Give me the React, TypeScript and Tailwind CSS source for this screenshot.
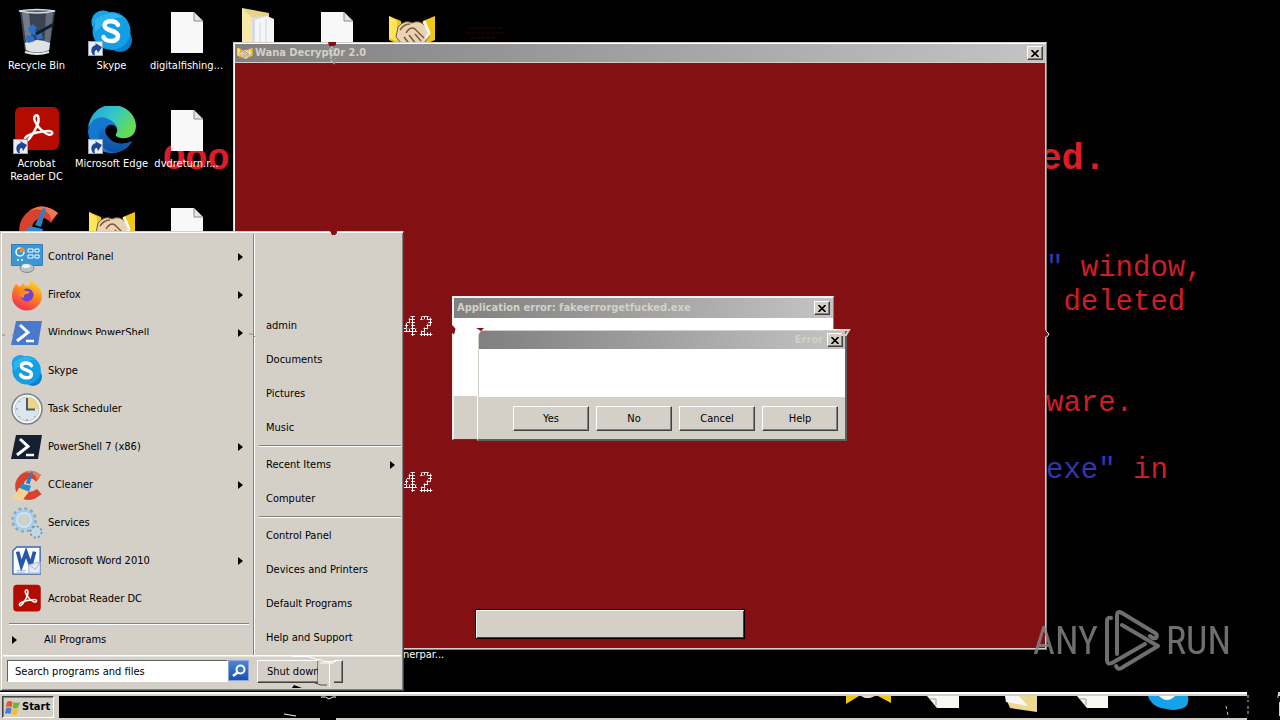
import React from "react";

type IconProps = { className?: string };

const UI = "font-['DejaVu_Sans_Condensed','DejaVu_Sans',sans-serif]";
const RAISED =
  "border border-t-white border-l-white border-r-[#404040] border-b-[#404040] bg-[#d4d0c8] shadow-[inset_-1px_-1px_0_#808080]";

function ShortcutArrow() {
  return (
    <svg viewBox="0 0 15 15" className="absolute bottom-0 left-0 h-[15px] w-[15px]" aria-hidden="true">
      <rect width="15" height="15" fill="#9aa4b4" />
      <rect x="1" y="1" width="13" height="13" fill="#e9eef6" />
      <path d="M5 14C2 10 3 5 8 4L7 2l7 4-4 6-1-3C7 9 6 11 7 14z" fill="#1f4796" />
    </svg>
  );
}

function RecycleBin({ className }: IconProps) {
  return (
    <svg viewBox="0 0 48 48" className={className} aria-hidden="true">
      <path d="M7 3L12 44Q24 49 36 44L42 3z" fill="#3a4450" />
      <path d="M9 5L14 42Q17 45 20 45L16 5z" fill="#8d979f" opacity=".7" />
      <path d="M33 5L31 44L36 43L40 5z" fill="#6d7883" opacity=".8" />
      <path d="M12 35Q24 29 37 35L36 42Q24 47 13 42z" fill="#dfe3e6" />
      <path d="M15 20l5-4 4 4-2 2 2 4-4 1-4-3zM14 27l6 1 2 5-7 2-2-4zM23 27l5-3 2 6-6 2z" fill="#2c6fc8" />
      <path d="M23 26L41 16" stroke="#101a33" strokeWidth="3" />
      <path d="M6 3Q24 0 42 3Q24 7 6 3z" fill="#56616c" stroke="#d7dde2" strokeWidth="1.500" />
      <path d="M12 44Q24 48 36 44" stroke="#e9edf0" strokeWidth="2" fill="none" />
    </svg>
  );
}

function SkypeIcon({ className }: IconProps) {
  return (
    <svg viewBox="0 0 48 48" className={className} aria-hidden="true">
      <circle cx="15" cy="14" r="11.500" fill="#1aa5ea" />
      <circle cx="32" cy="32" r="12" fill="#0a7fd0" />
      <circle cx="23.500" cy="23" r="19" fill="#129fe4" />
      <path d="M7 12Q20 0 35 9Q21 9 7 24z" fill="#3dbdf2" opacity=".7" />
      <path
        d="M30 17C28 12.500 17 11.500 16.500 17.500C16.500 23.500 30 21.500 30 28.500C29.500 35 17.500 34 15.500 29"
        fill="none"
        stroke="#fff"
        strokeWidth="4.500"
        strokeLinecap="round"
      />
    </svg>
  );
}

function PageIcon({ className }: IconProps) {
  return (
    <svg viewBox="0 0 48 48" className={className} aria-hidden="true">
      <path d="M8 4h23l9 9v32H8z" fill="#f8f8f8" />
      <path d="M31 4v9h9z" fill="#e4e4e4" stroke="#8a8a8a" strokeWidth="1" />
    </svg>
  );
}

function FolderIcon({ className }: IconProps) {
  return (
    <svg viewBox="0 0 48 48" className={className} aria-hidden="true">
      <path d="M4 0l27 5v42H4z" fill="#e8d384" />
      <path d="M11 10l14-2v38H11z" fill="#d7dce2" />
      <path d="M17 12l12-4 7 3v36H17z" fill="#f5f6f9" />
      <path d="M4 0l10 10v37H4z" fill="#f6e9a8" />
      <path d="M22 14v32M28 11v34" stroke="#cfd4da" strokeWidth="1" />
    </svg>
  );
}

function HandshakeIcon({ className }: IconProps) {
  return (
    <svg viewBox="0 0 48 48" className={className} aria-hidden="true">
      <path d="M1 8l12 5 4 26L1 32zM47 8l-12 5-4 26 16-7z" fill="#f2c714" />
      <path d="M1 8l8 5v20l-8-3z" fill="#ffe558" />
      <path d="M10 19Q17 11 24 15Q32 11 38 19L41 29Q35 37 28 43L22 41Q14 38 8 29z" fill="#ead3b4" stroke="#7a5a38" strokeWidth="1" />
      <path d="M18 25q4-7 9-4l9 9M16 29l7 9M21 27l7 9M27 26l6 7M12 22q4-6 10-6" fill="none" stroke="#7b5a3a" strokeWidth="1.500" />
      <path d="M36 13l5 12-3 5" fill="none" stroke="#f8f8f0" strokeWidth="3" />
    </svg>
  );
}

function AcrobatIcon({ className }: IconProps) {
  return (
    <svg viewBox="0 0 48 48" className={className} aria-hidden="true">
      <rect x="2" y="1" width="44" height="43" rx="6" fill="#b30b00" />
      <path
        d="M12 34C10 30 21 26 34 25C42 24 40 31 34 28C26 24 19 13 22 10C26 7 27 15 23 22C19 30 14 37 12 34z"
        fill="none"
        stroke="#fff"
        strokeWidth="2.500"
      />
    </svg>
  );
}

function EdgeIcon({ className }: IconProps) {
  return (
    <svg viewBox="0 0 48 48" className={className} aria-hidden="true">
      <defs>
        <linearGradient id="edgeTop" x1="0" x2="1" y1="0" y2=".5">
          <stop offset="0" stopColor="#1d9fd4" />
          <stop offset=".5" stopColor="#30c5cf" />
          <stop offset="1" stopColor="#66dc52" />
        </linearGradient>
        <linearGradient id="edgeLow" x1="0" x2="0" y1="0" y2="1">
          <stop offset="0" stopColor="#1a6fc4" />
          <stop offset="1" stopColor="#0f4f9f" />
        </linearGradient>
      </defs>
      <path d="M0 22C2 7 12 -1 24 -1C38 -1 48 9 48 20C48 30 40 33 33 32C29 31 27 30 28 28C31 24 29 17 20 16C10 15 3 16 0 22z" fill="url(#edgeTop)" />
      <path d="M0 24C3 12 13 9 20 13C25 15 29 19 29 23C27 18 21 17 18 22C14 31 28 43 44 35C40 43 32 47 24 47C10 47 0 37 0 24z" fill="#1577cf" />
      <path d="M17 20C10 24 8 33 14 40C18 45 24 47 29 46C36 45 42 40 44 35C36 40 26 38 21 32C17 28 16 24 17 20z" fill="url(#edgeLow)" />
    </svg>
  );
}

function CCleanerIcon({ className }: IconProps) {
  return (
    <svg viewBox="0 0 48 48" className={className} aria-hidden="true">
      <path d="M45 9Q30-3 16 7Q2 18 8 35Q17 51 35 45L46 38L39 30Q28 38 21 30Q16 20 25 15Q32 12 38 19z" fill="#d8412c" />
      <path d="M45 9Q30-3 16 7Q25 3 34 8Q38 11 38 16z" fill="#ee7a55" />
      <path d="M30 4l3 1-5 18-6-2z" fill="#2f7fc4" />
      <path d="M16 22l14 3-3 9-15-5z" fill="#2b8ad2" />
      <path d="M12 28l15 6-10 13Q6 46 0 40q8-3 12-12z" fill="#f3d29a" />
    </svg>
  );
}

function ControlPanelIcon({ className }: IconProps) {
  return (
    <svg viewBox="0 0 32 32" className={className} aria-hidden="true">
      <rect x="0" y="3" width="32" height="22" rx="1" fill="#2b7fc3" />
      <rect x="1" y="4" width="30" height="20" fill="#3c97d6" />
      <circle cx="9" cy="11" r="4" fill="none" stroke="#fff" strokeWidth="1.500" />
      <path d="M9 11V6a5 5 0 0 1 5 5z" fill="#f58a32" />
      <path d="M17 8h5v3h-5zM24 8h4v3h-4zM17 14h5v3h-5zM24 14h4v3h-4z" fill="#2f86c8" stroke="#fff" />
      <path d="M6 19h2M10 19h2" stroke="#fff" strokeWidth="1.500" />
      <ellipse cx="16" cy="27" rx="7" ry="4.500" fill="#b9c2c6" stroke="#7f8b90" />
      <ellipse cx="15" cy="25" rx="4" ry="2" fill="#eef2f3" />
    </svg>
  );
}

function FirefoxIcon({ className }: IconProps) {
  return (
    <svg viewBox="0 0 32 32" className={className} aria-hidden="true">
      <defs>
        <linearGradient id="fox" x1=".8" x2=".3" y1="0" y2="1">
          <stop offset="0" stopColor="#ffe838" />
          <stop offset=".45" stopColor="#ff8a1c" />
          <stop offset="1" stopColor="#f02a58" />
        </linearGradient>
      </defs>
      <path d="M5 5l4 3 3-4 2 3q3 0 5-1-1-4 1-6 2 4 6 6 5 5 5 11a15 14.500 0 0 1-30 0Q1 10 5 5z" fill="url(#fox)" />
      <circle cx="16" cy="16" r="6.500" fill="#7040d0" />
      <path d="M8 11q4-2 7 1 3 0 4 1-1 2-4 2-3 1-2 4-5 0-5-8z" fill="#ff8c20" />
    </svg>
  );
}

function PowerShellIcon({ className, dark }: IconProps & { dark?: boolean }) {
  return (
    <svg viewBox="0 0 32 32" className={className} aria-hidden="true">
      <path d="M5 4h26l-4 24H0z" fill={dark ? "#14202f" : "#4a78cc"} />
      <path d="M9 8l8 7.500L6 24" fill="none" stroke="#fff" strokeWidth="3" />
      <path d="M15 24h8" stroke="#fff" strokeWidth="2.500" />
    </svg>
  );
}

function ClockIcon({ className }: IconProps) {
  return (
    <svg viewBox="0 0 32 32" className={className} aria-hidden="true">
      <circle cx="16" cy="16" r="15" fill="#f7f8f8" stroke="#7d8387" strokeWidth="1.500" />
      <circle cx="16" cy="16" r="12" fill="#dce6ee" stroke="#c0c8cd" />
      <path d="M16 16V4a12 12 0 0 1 12 12z" fill="#ecd48e" />
      <path d="M16 5v12M15 16.500h9" stroke="#4f5a69" strokeWidth="2" />
      <path d="M5 16h2M16 26v2M8 8l1 1M8 24l1-1M24 24l-1-1" stroke="#7c8da0" />
    </svg>
  );
}

function ServicesIcon({ className }: IconProps) {
  return (
    <svg viewBox="0 0 32 32" className={className} aria-hidden="true">
      <circle cx="13" cy="13" r="11" fill="none" stroke="#83abc9" strokeWidth="3.500" strokeDasharray="3 2.750" />
      <circle cx="13" cy="13" r="8" fill="none" stroke="#a9cde6" strokeWidth="5" />
      <circle cx="13" cy="13" r="7" fill="none" stroke="#d8ecf8" strokeWidth="1.500" />
      <circle cx="25" cy="25" r="5" fill="none" stroke="#7397b2" strokeWidth="3" strokeDasharray="2 1.900" />
      <circle cx="25" cy="25" r="3.500" fill="#d4d0c8" stroke="#bcdcef" strokeWidth="2.500" />
    </svg>
  );
}

function WordIcon({ className }: IconProps) {
  return (
    <svg viewBox="0 0 32 32" className={className} aria-hidden="true">
      <path d="M5 1h25v29H1V5z" fill="#fdfdfe" stroke="#3868b0" strokeWidth="1.500" />
      <path d="M6 6l4 15 5-14 5 14L24 6" fill="none" stroke="#2458ac" strokeWidth="4" />
      <path d="M18 20l12-3v12H18z" fill="#e3eaf5" stroke="#9fb1d2" />
      <path d="M18 20l7 5 5-8M5 26h10M5 28h9" stroke="#a4b5d3" fill="none" />
    </svg>
  );
}

function WindowsFlag({ className }: IconProps) {
  return (
    <svg viewBox="0 0 16 16" className={className} aria-hidden="true">
      <path d="M2 2q3-2 6 0L7 8Q4 6 1 8z" fill="#e5562a" />
      <path d="M9 2q3 2 7 0l-2 6q-3 2-6 0z" fill="#6fb536" />
      <path d="M1 9q3-2 6 0l-1 6q-3-2-6 0z" fill="#3f7fd4" />
      <path d="M8 9q3 2 6 0l-1 6q-3 2-6 0z" fill="#f4bd2a" />
    </svg>
  );
}

function Arrow() {
  return (
    <svg viewBox="0 0 5 8" className="h-2 w-[5px]" aria-hidden="true">
      <path d="M0 0l5 4-5 4z" fill="#000" />
    </svg>
  );
}

function CloseButton({ label }: { label: string }) {
  return (
    <button type="button" aria-label={label} className={`flex h-[14px] w-4 shrink-0 items-center justify-center ${RAISED}`}>
      <svg viewBox="0 0 8 7" className="h-[7px] w-2" aria-hidden="true">
        <path d="M.5 0l7 7M7.500 0l-7 7" stroke="#000" strokeWidth="1.600" />
      </svg>
    </button>
  );
}

type DesktopItem = { label?: string; icon: React.ReactNode; shortcut?: boolean };

const desktop: DesktopItem[] = [
  { label: "Recycle Bin", icon: <RecycleBin className="h-12 w-12" /> },
  { label: "Skype", icon: <SkypeIcon className="h-12 w-12" />, shortcut: true },
  { label: "digitalfishing...", icon: <PageIcon className="h-12 w-12" /> },
  { icon: <FolderIcon className="h-12 w-12" /> },
  { icon: <PageIcon className="h-12 w-12" /> },
  { icon: <HandshakeIcon className="h-12 w-12" /> },
  { label: "Acrobat Reader DC", icon: <AcrobatIcon className="h-12 w-12" />, shortcut: true },
  { label: "Microsoft Edge", icon: <EdgeIcon className="h-12 w-12" />, shortcut: true },
  { label: "dvdreturn.r...", icon: <PageIcon className="h-12 w-12" /> },
  { icon: null },
  { icon: null },
  { icon: null },
  { icon: <CCleanerIcon className="h-12 w-12" /> },
  { icon: <HandshakeIcon className="h-12 w-12" /> },
  { icon: <PageIcon className="h-12 w-12" /> },
];

function Desktop() {
  return (
    <div className="absolute -left-px top-2 grid auto-rows-[98px] grid-cols-[repeat(6,75px)]">
      {desktop.map((item, i) => (
        <div key={i} className="flex flex-col items-center gap-[3px]">
          <div className="relative">
            {item.icon}
            {item.shortcut && <ShortcutArrow />}
          </div>
          {item.label && (
            <span className={`text-center text-[11px] leading-[13px] text-white ${item.label.includes("Reader") ? "w-[60px]" : "whitespace-nowrap"}`}>
              {item.label}
            </span>
          )}
        </div>
      ))}
    </div>
  );
}

function Wallpaper() {
  return (
    <div className="absolute inset-0 font-['Liberation_Mono',monospace]">
      <p className="absolute left-[163px] top-[139px] flex w-[943px] justify-between text-[37px] font-bold leading-[40px] text-[#e01b28]">
        <span>Ooo</span>
        <span>ed.</span>
      </p>
      <div className="absolute left-[1046px] top-[252px] flex flex-col whitespace-pre text-[29px] leading-[34px] text-[#cf1c26]">
        <p>
          <span className="text-[#3437a8]">"</span> window,
        </p>
        <p> deleted</p>
        <p className="mt-[67px]">ware.</p>
        <p className="mt-[33px]">
          <span className="text-[#3437a8]">exe"</span> in
        </p>
      </div>
      <svg viewBox="0 0 40 14" className="absolute left-[465px] top-[26px] h-[14px] w-10" aria-hidden="true">
        <path d="M3 2h34M1 7h38M6 12h26" stroke="#2a0507" strokeDasharray="4 1" />
      </svg>
    </div>
  );
}

function DotCounter() {
  return (
    <p className="bg-[radial-gradient(circle,#fff_55%,transparent_65%)] bg-[length:3px_3px] bg-clip-text font-['DejaVu_Sans_Mono',monospace] text-[27px] font-bold leading-[30px] text-transparent">
      42
    </p>
  );
}

function WanaWindow() {
  return (
    <section
      aria-label="Wana Decrypt0r 2.0"
      className="absolute left-[233px] top-[42px] flex h-[608px] w-[814px] flex-col border border-[#d4d0c8] border-b-[#808080] border-r-[#808080] bg-[#831012] shadow-[inset_1px_1px_0_#fff,inset_-1px_-1px_0_#d4d0c8]"
    >
      <header className="mx-px mt-px flex h-[19px] items-center gap-[2px] border-b border-[#d4d0c8] bg-linear-to-r from-[#808080] to-[#c4c4c4] px-[2px]">
        <HandshakeIcon className="h-4 w-4" />
        <h1 className="flex-1 text-[11px] font-bold leading-4 text-[#d4d0c8]">Wana Decrypt0r 2.0</h1>
        <CloseButton label="Close Wana Decrypt0r" />
      </header>
      <div className="flex flex-1 flex-col items-start gap-[126px] pl-[168px] pt-[249px]">
        <DotCounter />
        <DotCounter />
      </div>
      <div className="flex justify-start pb-[10px] pl-[241px]">
        <button
          type="button"
          aria-label="Check Payment"
          className="h-[30px] w-[270px] border border-black bg-[#d4d0c8] shadow-[inset_1px_1px_0_#fff,inset_-1px_-1px_0_#404040]"
        />
      </div>
    </section>
  );
}

function ErrorDialogs() {
  return (
    <>
      <section
        aria-label="Application error"
        className="absolute left-[452px] top-[296px] flex h-[144px] w-[382px] flex-col border-2 border-b border-r border-[#f4f2ee] border-b-[#404040] border-r-[#808080] bg-[#d4d0c8]"
      >
        <header className="flex h-5 items-center bg-linear-to-r from-[#808080] to-[#c4c4c4] px-[3px]">
          <h2 className="flex-1 text-[11px] font-bold leading-4 text-[#d4d0c8]">Application error: fakeerrorgetfucked.exe</h2>
          <CloseButton label="Close application error" />
        </header>
        <div className="h-[78px] bg-white" />
      </section>
      <section
        aria-label="Error"
        className="absolute left-[477px] top-[329px] flex h-[112px] w-[370px] flex-col border border-b-2 border-r-2 border-white border-b-[#606060] border-r-[#606060] bg-[#d4d0c8] pl-px pt-px"
      >
        <header className="flex h-[18px] items-center gap-1 bg-linear-to-r from-[#808080] to-[#c4c4c4] pr-[2px]">
          <h2 className="flex-1 text-right text-[11px] font-bold leading-4 text-[#d4d0c8]">Error</h2>
          <CloseButton label="Close error" />
        </header>
        <div className="h-12 bg-white" />
        <div className="flex justify-end gap-[7px] pr-[7px] pt-[9px]">
          {["Yes", "No", "Cancel", "Help"].map((t) => (
            <button key={t} type="button" className={`h-[25px] w-[76px] text-[11px] leading-[14px] ${RAISED}`}>
              {t}
            </button>
          ))}
        </div>
      </section>
    </>
  );
}

const programs: { label: string; icon: React.ReactNode; more?: boolean }[] = [
  { label: "Control Panel", icon: <ControlPanelIcon className="h-8 w-8" />, more: true },
  { label: "Firefox", icon: <FirefoxIcon className="h-8 w-8" />, more: true },
  { label: "Windows PowerShell", icon: <PowerShellIcon className="h-8 w-8" />, more: true },
  { label: "Skype", icon: <SkypeIcon className="h-9 w-9" /> },
  { label: "Task Scheduler", icon: <ClockIcon className="h-8 w-8" /> },
  { label: "PowerShell 7 (x86)", icon: <PowerShellIcon dark className="h-8 w-8" />, more: true },
  { label: "CCleaner", icon: <CCleanerIcon className="h-8 w-8" />, more: true },
  { label: "Services", icon: <ServicesIcon className="h-8 w-8" /> },
  { label: "Microsoft Word 2010", icon: <WordIcon className="h-[30px] w-[30px]" />, more: true },
  { label: "Acrobat Reader DC", icon: <AcrobatIcon className="h-[30px] w-[30px]" /> },
];

const places: { label: string; more?: boolean }[][] = [
  [{ label: "admin" }, { label: "Documents" }, { label: "Pictures" }, { label: "Music" }],
  [{ label: "Recent Items", more: true }, { label: "Computer" }],
  [{ label: "Control Panel" }, { label: "Devices and Printers" }, { label: "Default Programs" }, { label: "Help and Support" }],
];

function StartMenu() {
  return (
    <nav
      aria-label="Start menu"
      className="absolute bottom-[29px] left-0 flex w-[404px] flex-col border border-[#d4d0c8] border-b-[#404040] border-r-[#404040] bg-[#d4d0c8] text-[11px] leading-[14px] text-black shadow-[inset_1px_1px_0_#fff,inset_-1px_-1px_0_#808080]"
    >
      <div className="flex px-[2px] pt-[2px]">
        <div className="flex w-[251px] flex-col border-r border-[#808080] pt-1">
          <ul>
            {programs.map((p) => (
              <li key={p.label}>
                <button type="button" className="flex h-[38px] w-full items-center pl-[6px] pr-[10px] text-left">
                  <span className="flex w-9 shrink-0 justify-center">{p.icon}</span>
                  <span className="flex-1 pl-[3px]">{p.label}</span>
                  {p.more && <Arrow />}
                </button>
              </li>
            ))}
          </ul>
          <div className="ml-[6px] mr-1 mt-[5px] h-[2px] border-b border-t border-b-white border-t-[#808080]" />
          <button type="button" className="flex h-[30px] items-center gap-[27px] pl-[9px] text-left">
            <Arrow />
            All Programs
          </button>
        </div>
        <div className="flex flex-1 flex-col justify-end border-l border-white">
          {places.map((group, g) => (
            <React.Fragment key={g}>
              {g > 0 && <div className="ml-1 h-[3px] border-t border-t-[#808080] shadow-[inset_0_1px_0_#fff]" />}
              <ul>
                {group.map((p) => (
                  <li key={p.label}>
                    <button type="button" className="flex h-[34px] w-full items-center justify-between pl-[11px] pr-[6px] text-left">
                      {p.label}
                      {p.more && <Arrow />}
                    </button>
                  </li>
                ))}
              </ul>
            </React.Fragment>
          ))}
        </div>
      </div>
      <div className="mx-[2px] flex h-[35px] items-start border-t border-t-white pl-1 pt-1 shadow-[inset_0_1px_0_#e8e6e1]">
        <input
          type="text"
          aria-label="Search programs and files"
          placeholder="Search programs and files"
          className="h-[22px] w-[221px] border border-b-white border-l-[#606060] border-r-white border-t-[#606060] bg-white pl-[7px] text-[11px] leading-[14px] placeholder:text-black"
        />
        <button type="button" aria-label="Search" className="flex h-[21px] w-[21px] items-center justify-center border border-[#8ba6cf] bg-linear-to-b from-[#4d86dd] to-[#1c4db4]">
          <svg viewBox="0 0 16 16" className="h-4 w-4" aria-hidden="true">
            <circle cx="9.500" cy="6.500" r="4" fill="#3a74cc" stroke="#fff" strokeWidth="2" />
            <path d="M6.500 9.500L2 13" stroke="#fff" strokeWidth="2.500" />
          </svg>
        </button>
        <div className="ml-2 flex">
          <button type="button" className={`h-[23px] w-[62px] whitespace-nowrap pl-[9px] text-left ${RAISED}`}>
            Shut down
          </button>
          <button type="button" aria-label="Shut down options" className={`flex h-[23px] w-6 items-center justify-center ${RAISED}`}>
            <Arrow />
          </button>
        </div>
      </div>
    </nav>
  );
}

function Taskbar() {
  return (
    <footer className="absolute inset-x-0 bottom-0 flex h-7">
      <div className="flex min-w-0 flex-1 flex-col border-b-2 border-t-4 border-b-[#d4d0c8] border-t-[#d4d0c8] bg-black">
        <div className="relative flex h-[22px] before:absolute before:inset-x-0 before:-top-[4px] before:h-[2px] before:bg-white">
          <div className="flex w-[59px] items-start bg-[#d4d0c8] pl-[2px]">
            <button
              type="button"
              className="flex h-[22px] w-[52px] items-center gap-[2px] border border-b-white border-l-[#404040] border-r-white border-t-[#404040] pl-[2px] text-[11px] font-bold leading-[14px] shadow-[inset_1px_1px_0_#808080]"
            >
              <WindowsFlag className="h-[15px] w-[15px]" />
              Start
            </button>
          </div>
          <svg viewBox="0 0 345 16" className="absolute left-[846px] top-0 h-4 w-[345px]" aria-hidden="true">
            <path d="M0 0h13L0 8zM32 0h13v7z" fill="#f2c714" />
            <path d="M15 0h14l-5 2h-5z" fill="#e9dcc4" />
            <path d="M81 0h32v12H91z" fill="#f8f8f4" />
            <path d="M84 3h6v6" fill="none" stroke="#999" />
            <path d="M159 0h32v16l-27-4z" fill="#ecd98e" />
            <path d="M159 0h14l9 10-22-4z" fill="#f6f6f6" />
            <path d="M231 0h31v12h-21z" fill="#f8f8f4" />
            <path d="M234 3h6v6" fill="none" stroke="#999" />
            <path d="M302 0h40Q344 12 333 13Q327 15 321 13Q306 12 302 0z" fill="#14a3e8" />
            <path d="M313 0h16q-8 8-16 0z" fill="#fff" />
          </svg>
        </div>
      </div>
      <svg viewBox="0 0 33 28" className="h-7 w-[33px] bg-black" aria-hidden="true">
        <path d="M1 3v7M1 14v10M31 3v3" stroke="#c8c4bc" strokeDasharray="3 2" />
        <path d="M31 0h2v4h-2zM32 10h1v14h-1z" fill="#d4d0c8" />
      </svg>
    </footer>
  );
}

function Watermark() {
  return (
    <div className="absolute right-[49px] top-[610px] flex h-[62px] items-center gap-[6px] font-['Liberation_Sans_Narrow','Roboto_Condensed','Liberation_Sans',sans-serif] text-[38px] leading-[62px] text-[#8a8a8a] opacity-80">
      <span>ANY</span>
      <svg viewBox="0 0 56 62" className="h-[62px] w-14" fill="none" stroke="#8a8a8a" strokeWidth="4" strokeLinejoin="round" strokeLinecap="round" aria-hidden="true">
        <path d="M7 8Q3 7 3 11V50Q3 55 8 53L41 34" />
        <path d="M13 44V6Q13 0 18 3L51 23Q54 25 52 28Q49 29 46 26" />
        <path d="M18 15L54 36L19 57Q14 61 12 56" />
      </svg>
      <span>RUN</span>
    </div>
  );
}

function GlitchTrails() {
  return (
    <svg className="pointer-events-none absolute inset-0 h-full w-full" aria-hidden="true">
      <path d="M328 42h8v3l-2 1h-5zM330 231h7v2l-2 2h-3zM452 325l5 5-2 5-3-2zM1045 330l4 4-4 3z" fill="#831012" />
      <path d="M456 327h22l3 4-3 4h-2v61h-20v-61h-2z" fill="#fff" />
      <path d="M476 328h8l-3 3z" fill="#831012" />
      <path d="M331 47l5 3-3 5h4M331 52v8l3 4 2-6" fill="none" stroke="#d8d8d8" strokeDasharray="3 1" />
      <path d="M332 59h5l-3 6z" fill="#8c8c8c" />
      <path d="M840 330h9l-3 5h-5" fill="none" stroke="#d4d0c8" strokeWidth="2" />
      <path d="M1046 331l3 3-2 3" fill="none" stroke="#eee" />
      <path d="M48 336h104" stroke="#d4d0c8" strokeWidth="2" />
      <path d="M249 334h3l3 3M2 335h3M12 335h3" fill="none" stroke="#8e887f" />
      <path d="M318 659h10v27h-10zM328 659h6v27h-6z" fill="#d4d0c8" />
      <path d="M292 656.500h16l9 3h3l4 2h12M329.500 661v26M320 663h14" fill="none" stroke="#fff" />
      <path d="M312 682l9 3h6M317.500 668v6" fill="none" stroke="#505050" />
      <path d="M292 688l2-3 8 3zM320 696h16v4h-16zM320 715h16v5h-16z" fill="#000" />
      <path d="M321 697q5-1 8 2 4-3 7-2M284 714l12 2" fill="none" stroke="#f5f5f5" />
      <path d="M1226 706l3 14" stroke="#ccc" strokeDasharray="3 3" />
    </svg>
  );
}

export default function App() {
  return (
    <main className={`relative h-screen w-full overflow-hidden bg-black ${UI}`}>
      <Wallpaper />
      <Desktop />
      <span className="absolute left-[403px] top-[648px] text-[11px] leading-[13px] text-white">nerpar...</span>
      <WanaWindow />
      <ErrorDialogs />
      <Taskbar />
      <StartMenu />
      <GlitchTrails />
      <Watermark />
    </main>
  );
}
